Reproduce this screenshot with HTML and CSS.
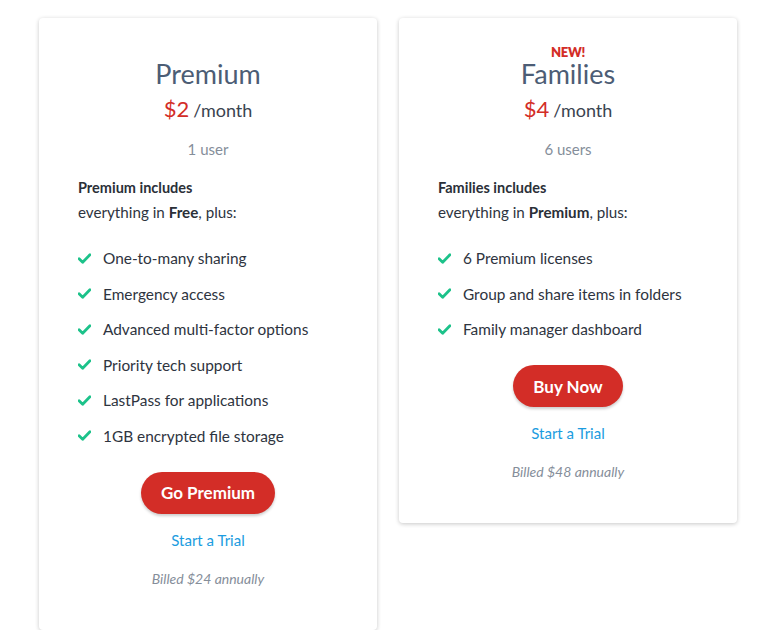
FILE: index.html
```html
<!DOCTYPE html>
<html>
<head>
<meta charset="utf-8">
<link rel="stylesheet" href="styles.css">
</head>
<body>
<div class="plans">
  <div class="card">
    <div class="badge badge-empty">&nbsp;</div>
    <h2 class="title">Premium</h2>
    <div class="price"><span class="amount">$2</span> <span class="per">/month</span></div>
    <div class="users">1 user</div>
    <div class="includes">
      <div class="inc-title">Premium includes</div>
      <div class="inc-sub">everything in <b>Free</b>, plus:</div>
    </div>
    <ul class="features">
      <li><svg class="check" viewBox="0 0 12 10"><path d="M1 5.2 L4.3 8.4 L11 1.6" fill="none" stroke="#1cc28a" stroke-width="2.6" stroke-linecap="round" stroke-linejoin="round"/></svg>One-to-many sharing</li>
      <li><svg class="check" viewBox="0 0 12 10"><path d="M1 5.2 L4.3 8.4 L11 1.6" fill="none" stroke="#1cc28a" stroke-width="2.6" stroke-linecap="round" stroke-linejoin="round"/></svg>Emergency access</li>
      <li><svg class="check" viewBox="0 0 12 10"><path d="M1 5.2 L4.3 8.4 L11 1.6" fill="none" stroke="#1cc28a" stroke-width="2.6" stroke-linecap="round" stroke-linejoin="round"/></svg>Advanced multi-factor options</li>
      <li><svg class="check" viewBox="0 0 12 10"><path d="M1 5.2 L4.3 8.4 L11 1.6" fill="none" stroke="#1cc28a" stroke-width="2.6" stroke-linecap="round" stroke-linejoin="round"/></svg>Priority tech support</li>
      <li><svg class="check" viewBox="0 0 12 10"><path d="M1 5.2 L4.3 8.4 L11 1.6" fill="none" stroke="#1cc28a" stroke-width="2.6" stroke-linecap="round" stroke-linejoin="round"/></svg>LastPass for applications</li>
      <li><svg class="check" viewBox="0 0 12 10"><path d="M1 5.2 L4.3 8.4 L11 1.6" fill="none" stroke="#1cc28a" stroke-width="2.6" stroke-linecap="round" stroke-linejoin="round"/></svg>1GB encrypted file storage</li>
    </ul>
    <div class="actions">
      <a class="btn">Go Premium</a>
      <a class="trial">Start a Trial</a>
      <div class="billed">Billed $24 annually</div>
    </div>
  </div>
  <div class="card">
    <div class="badge">NEW!</div>
    <h2 class="title">Families</h2>
    <div class="price"><span class="amount">$4</span> <span class="per">/month</span></div>
    <div class="users">6 users</div>
    <div class="includes">
      <div class="inc-title">Families includes</div>
      <div class="inc-sub">everything in <b>Premium</b>, plus:</div>
    </div>
    <ul class="features">
      <li><svg class="check" viewBox="0 0 12 10"><path d="M1 5.2 L4.3 8.4 L11 1.6" fill="none" stroke="#1cc28a" stroke-width="2.6" stroke-linecap="round" stroke-linejoin="round"/></svg>6 Premium licenses</li>
      <li><svg class="check" viewBox="0 0 12 10"><path d="M1 5.2 L4.3 8.4 L11 1.6" fill="none" stroke="#1cc28a" stroke-width="2.6" stroke-linecap="round" stroke-linejoin="round"/></svg>Group and share items in folders</li>
      <li><svg class="check" viewBox="0 0 12 10"><path d="M1 5.2 L4.3 8.4 L11 1.6" fill="none" stroke="#1cc28a" stroke-width="2.6" stroke-linecap="round" stroke-linejoin="round"/></svg>Family manager dashboard</li>
    </ul>
    <div class="actions">
      <a class="btn">Buy Now</a>
      <a class="trial">Start a Trial</a>
      <div class="billed">Billed $48 annually</div>
    </div>
  </div>
</div>
</body>
</html>
```
FILE: styles.css
```css
* { box-sizing: border-box; }
html, body { margin: 0; padding: 0; background: #fff; }
body {
  font-family: Lato, "Noto Sans", "Liberation Sans", sans-serif;
  color: #2e3440;
}
.plans {
  display: flex;
  align-items: flex-start;
  gap: 22px;
  padding: 18px 0 0 39px;
}
.card {
  width: 338px;
  background: #fff;
  border-radius: 4px;
  box-shadow: 0 1px 4px rgba(0,0,0,0.22);
  padding: 27px 39px 41px;
  display: flex;
  flex-direction: column;
}
.badge {
  height: 14px;
  line-height: 14px;
  text-align: center;
  color: #d32d27;
  font-weight: 800;
  font-size: 13px;
  letter-spacing: -0.3px;
}
.badge-empty { visibility: hidden; }
.title {
  margin: 0;
  font-size: 27px;
  line-height: 30px;
  font-weight: 400;
  color: #4c5d75;
  text-align: center;
}
.price {
  margin-top: 8px;
  height: 24px;
  line-height: 24px;
  text-align: center;
}
.amount { color: #d32d27; font-size: 22px; }
.per { color: #3a4350; font-size: 18px; }
.users {
  margin-top: 18px;
  line-height: 20px;
  text-align: center;
  color: #858e9a;
  font-size: 15px;
}
.includes { margin-top: 16px; }
.inc-title {
  line-height: 25px;
  font-size: 14.5px;
  font-weight: 700;
  color: #2b3038;
}
.inc-sub {
  line-height: 25px;
  font-size: 15.2px;
  color: #2e3440;
}
.inc-sub b { font-weight: 700; color: #2b3038; }
.features {
  list-style: none;
  margin: 15.5px 0 0;
  padding: 0;
}
.features li {
  display: flex;
  align-items: center;
  height: 35.5px;
  font-size: 15.4px;
  color: #2e3440;
}
.check {
  width: 13px;
  height: 11px;
  margin-right: 12px;
  flex: none;
}
.actions {
  margin-top: 18px;
  display: flex;
  flex-direction: column;
  align-items: center;
}
.btn {
  display: inline-flex;
  align-items: center;
  justify-content: center;
  height: 42px;
  padding: 0 20px;
  border-radius: 21px;
  background: #d32d27;
  color: #fff;
  font-size: 17px;
  font-weight: 700;
  box-shadow: 0 2px 3px rgba(0,0,0,0.2);
}
.trial {
  margin-top: 16px;
  line-height: 20px;
  color: #1b9ce0;
  font-size: 15px;
}
.billed {
  margin-top: 19px;
  line-height: 20px;
  font-size: 14px;
  font-style: italic;
  color: #858e9a;
}
```
